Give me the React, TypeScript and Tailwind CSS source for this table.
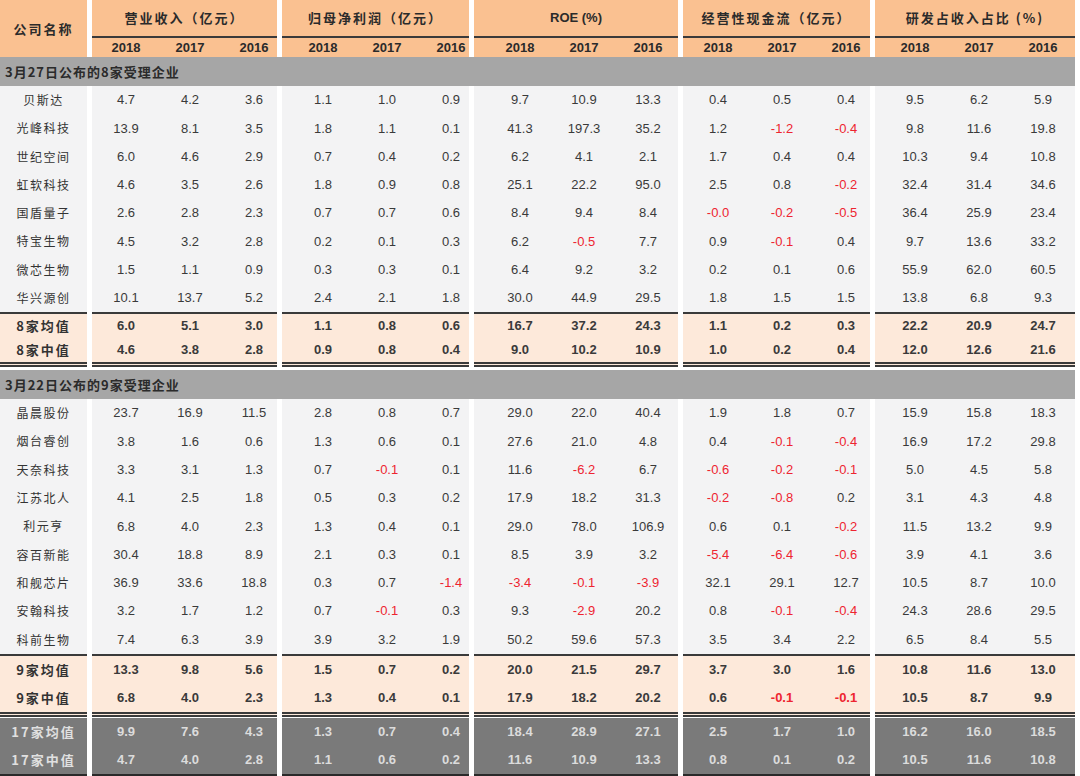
import React from "react";

type Kind = "data" | "sum" | "total";

interface Entry {
	name: string;
	values: string[];
}

const widths = ["w-[87px]", "w-[185px]", "w-[187px]", "w-[204px]", "w-[187px]", "w-[200px]"];
const pads = ["", "pl-[2px]", "pl-[9px]", "pl-[14px]", "pl-[3px]", "pl-[8px]"];

const titles = ["营业收入（亿元）", "归母净利润（亿元）", "ROE (%)", "经营性现金流（亿元）", "研发占收入占比 (%)"];

const cjk = "font-['Noto_Sans_CJK_SC',sans-serif]";
const num = "font-['Liberation_Sans',Arial,sans-serif]";

const group1: Entry[] = [
	{ name: "贝斯达", values: ["4.7", "4.2", "3.6", "1.1", "1.0", "0.9", "9.7", "10.9", "13.3", "0.4", "0.5", "0.4", "9.5", "6.2", "5.9"] },
	{ name: "光峰科技", values: ["13.9", "8.1", "3.5", "1.8", "1.1", "0.1", "41.3", "197.3", "35.2", "1.2", "-1.2", "-0.4", "9.8", "11.6", "19.8"] },
	{ name: "世纪空间", values: ["6.0", "4.6", "2.9", "0.7", "0.4", "0.2", "6.2", "4.1", "2.1", "1.7", "0.4", "0.4", "10.3", "9.4", "10.8"] },
	{ name: "虹软科技", values: ["4.6", "3.5", "2.6", "1.8", "0.9", "0.8", "25.1", "22.2", "95.0", "2.5", "0.8", "-0.2", "32.4", "31.4", "34.6"] },
	{ name: "国盾量子", values: ["2.6", "2.8", "2.3", "0.7", "0.7", "0.6", "8.4", "9.4", "8.4", "-0.0", "-0.2", "-0.5", "36.4", "25.9", "23.4"] },
	{ name: "特宝生物", values: ["4.5", "3.2", "2.8", "0.2", "0.1", "0.3", "6.2", "-0.5", "7.7", "0.9", "-0.1", "0.4", "9.7", "13.6", "33.2"] },
	{ name: "微芯生物", values: ["1.5", "1.1", "0.9", "0.3", "0.3", "0.1", "6.4", "9.2", "3.2", "0.2", "0.1", "0.6", "55.9", "62.0", "60.5"] },
	{ name: "华兴源创", values: ["10.1", "13.7", "5.2", "2.4", "2.1", "1.8", "30.0", "44.9", "29.5", "1.8", "1.5", "1.5", "13.8", "6.8", "9.3"] },
];

const sum1: Entry[] = [
	{ name: "8家均值", values: ["6.0", "5.1", "3.0", "1.1", "0.8", "0.6", "16.7", "37.2", "24.3", "1.1", "0.2", "0.3", "22.2", "20.9", "24.7"] },
	{ name: "8家中值", values: ["4.6", "3.8", "2.8", "0.9", "0.8", "0.4", "9.0", "10.2", "10.9", "1.0", "0.2", "0.4", "12.0", "12.6", "21.6"] },
];

const group2: Entry[] = [
	{ name: "晶晨股份", values: ["23.7", "16.9", "11.5", "2.8", "0.8", "0.7", "29.0", "22.0", "40.4", "1.9", "1.8", "0.7", "15.9", "15.8", "18.3"] },
	{ name: "烟台睿创", values: ["3.8", "1.6", "0.6", "1.3", "0.6", "0.1", "27.6", "21.0", "4.8", "0.4", "-0.1", "-0.4", "16.9", "17.2", "29.8"] },
	{ name: "天奈科技", values: ["3.3", "3.1", "1.3", "0.7", "-0.1", "0.1", "11.6", "-6.2", "6.7", "-0.6", "-0.2", "-0.1", "5.0", "4.5", "5.8"] },
	{ name: "江苏北人", values: ["4.1", "2.5", "1.8", "0.5", "0.3", "0.2", "17.9", "18.2", "31.3", "-0.2", "-0.8", "0.2", "3.1", "4.3", "4.8"] },
	{ name: "利元亨", values: ["6.8", "4.0", "2.3", "1.3", "0.4", "0.1", "29.0", "78.0", "106.9", "0.6", "0.1", "-0.2", "11.5", "13.2", "9.9"] },
	{ name: "容百新能", values: ["30.4", "18.8", "8.9", "2.1", "0.3", "0.1", "8.5", "3.9", "3.2", "-5.4", "-6.4", "-0.6", "3.9", "4.1", "3.6"] },
	{ name: "和舰芯片", values: ["36.9", "33.6", "18.8", "0.3", "0.7", "-1.4", "-3.4", "-0.1", "-3.9", "32.1", "29.1", "12.7", "10.5", "8.7", "10.0"] },
	{ name: "安翰科技", values: ["3.2", "1.7", "1.2", "0.7", "-0.1", "0.3", "9.3", "-2.9", "20.2", "0.8", "-0.1", "-0.4", "24.3", "28.6", "29.5"] },
	{ name: "科前生物", values: ["7.4", "6.3", "3.9", "3.9", "3.2", "1.9", "50.2", "59.6", "57.3", "3.5", "3.4", "2.2", "6.5", "8.4", "5.5"] },
];

const sum2: Entry[] = [
	{ name: "9家均值", values: ["13.3", "9.8", "5.6", "1.5", "0.7", "0.2", "20.0", "21.5", "29.7", "3.7", "3.0", "1.6", "10.8", "11.6", "13.0"] },
	{ name: "9家中值", values: ["6.8", "4.0", "2.3", "1.3", "0.4", "0.1", "17.9", "18.2", "20.2", "0.6", "-0.1", "-0.1", "10.5", "8.7", "9.9"] },
];

const totals: Entry[] = [
	{ name: "17家均值", values: ["9.9", "7.6", "4.3", "1.3", "0.7", "0.4", "18.4", "28.9", "27.1", "2.5", "1.7", "1.0", "16.2", "16.0", "18.5"] },
	{ name: "17家中值", values: ["4.7", "4.0", "2.8", "1.1", "0.6", "0.2", "11.6", "10.9", "13.3", "0.8", "0.1", "0.2", "10.5", "11.6", "10.8"] },
];

const bgFor: Record<Kind, string> = {
	data: "bg-[#f3f3f4]",
	sum: "bg-[#fde9da]",
	total: "bg-[#7a7a7a]",
};

const Row = ({ entry, kind, height, border }: { entry: Entry; kind: Kind; height: string; border?: string }) => {
	const bg = bgFor[kind];
	const bold = kind === "data" ? "" : "font-bold";
	const textColor = kind === "total" ? "text-[#dcdcdc]" : "text-[#3a3a3a]";
	return (
		<div className="flex gap-x-[5px]">
			<div className={`${widths[0]} ${height} ${bg} ${border ?? ""} flex items-center justify-center`}>
				<span
					className={`${cjk} ${bold} ${kind === "total" ? "text-[#e0e0e0]" : "text-[#333]"} ${kind === "data" ? "text-[12px] tracking-[1.5px]" : "text-[13px] tracking-[2px]"}`}
				>
					{entry.name}
				</span>
			</div>
			{[1, 2, 3, 4, 5].map((g) => (
				<div key={g} className={`${widths[g]} ${pads[g]} ${height} ${bg} ${border ?? ""} grid grid-cols-[64px_64px_64px] items-center`}>
					{entry.values.slice((g - 1) * 3, g * 3).map((v, i) => (
						<span
							key={i}
							className={`${num} ${bold} text-[13px] text-center ${v.startsWith("-") ? "text-[#ee2430]" : textColor}`}
						>
							{v}
						</span>
					))}
				</div>
			))}
		</div>
	);
};

const Section = ({ title, className }: { title: string; className?: string }) => (
	<div className={`h-[29px] bg-[#a6a6a6] flex items-center pl-[5px] ${className ?? ""}`}>
		<span className={`${cjk} font-bold text-[13px] tracking-[1px] text-[#2b2b2b]`}>{title}</span>
	</div>
);

export default function App() {
	return (
		<div className="w-[1080px] h-[776px] bg-white overflow-hidden">
			<div className="w-[1075px]">
				{/* header */}
				<div className="flex gap-x-[5px]">
					<div className={`${widths[0]} h-[57px] bg-[#fac191] flex items-center justify-center`}>
						<span className={`${cjk} font-bold text-[13px] tracking-[2px] text-[#2b2b2b]`}>公司名称</span>
					</div>
					{titles.map((t, idx) => (
						<div key={t} className={`${widths[idx + 1]} h-[57px] bg-[#fac191] flex flex-col`}>
							<div className="h-[38px] border-b-2 border-[#3a3a3a] flex items-center justify-center">
								<span
									className={`${t.startsWith("ROE") ? num : cjk} font-bold text-[13px] ${t.startsWith("ROE") ? "" : "tracking-[2px]"} text-[#2b2b2b]`}
								>
									{t}
								</span>
							</div>
							<div className={`h-[19px] ${pads[idx + 1]} grid grid-cols-[64px_64px_64px] items-center`}>
								{["2018", "2017", "2016"].map((y) => (
									<span key={y} className={`${num} font-bold text-[13px] text-center text-[#2b2b2b]`}>
										{y}
									</span>
								))}
							</div>
						</div>
					))}
				</div>

				<Section title="3月27日公布的8家受理企业" />
				{group1.map((e, i) => (
					<Row
						key={e.name}
						entry={e}
						kind="data"
						height={i === group1.length - 1 ? "h-[30.25px]" : "h-[28.25px]"}
						border={i === group1.length - 1 ? "border-b-2 border-[#3a3a3a]" : ""}
					/>
				))}
				<Row entry={sum1[0]} kind="sum" height="h-[24px]" />
				<Row entry={sum1[1]} kind="sum" height="h-[29px]" border="border-b-[5px] border-double border-[#3a3a3a]" />

				<Section title="3月22日公布的9家受理企业" className="mt-[3px]" />
				{group2.map((e, i) => (
					<Row
						key={e.name}
						entry={e}
						kind="data"
						height={i === group2.length - 1 ? "h-[30.3px]" : "h-[28.3px]"}
						border={i === group2.length - 1 ? "border-b-2 border-[#3a3a3a]" : ""}
					/>
				))}
				<Row entry={sum2[0]} kind="sum" height="h-[28px]" />
				<Row entry={sum2[1]} kind="sum" height="h-[33px]" border="border-b-[5px] border-double border-[#3a3a3a]" />

				<div className="mt-[1px]">
					<Row entry={totals[0]} kind="total" height="h-[28px]" />
					<Row entry={totals[1]} kind="total" height="h-[30px]" border="border-b-2 border-[#2a2a2a]" />
				</div>
			</div>
		</div>
	);
}
